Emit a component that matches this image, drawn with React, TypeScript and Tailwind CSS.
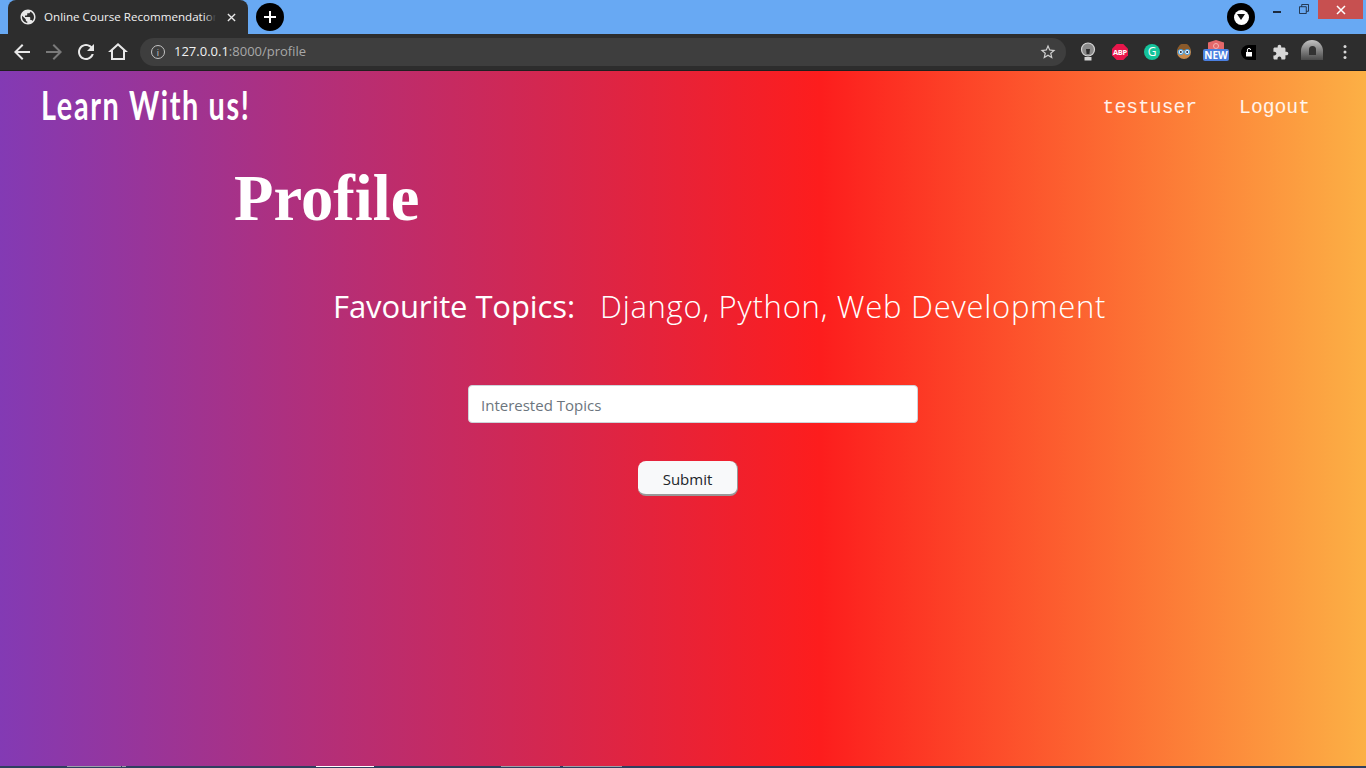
import { useState } from 'react'

const BACK = 'M20 11H7.83l5.59-5.59L12 4l-8 8 8 8 1.41-1.41L7.83 13H20v-2z'
const FORWARD = 'M4 11h12.17l-5.59-5.59L12 4l8 8-8 8-1.41-1.41L16.17 13H4v-2z'
const RELOAD = 'M17.65 6.35C16.2 4.9 14.21 4 12 4c-4.42 0-7.99 3.58-7.99 8s3.57 8 7.99 8c3.73 0 6.84-2.55 7.73-6h-2.08c-.82 2.33-3.04 4-5.65 4-3.31 0-6-2.69-6-6s2.69-6 6-6c1.66 0 3.14.69 4.22 1.78L13 11h7V4l-2.35 2.35z'
const HOME = 'M12 3L2 12h3v8h14v-8h3L12 3zm5 15H7v-7.81l5-4.5 5 4.5V18z'
const STAR = 'M22 9.24l-7.19-.62L12 2 9.19 8.63 2 9.24l5.46 4.73L5.82 21 12 17.27 18.18 21l-1.63-7.03L22 9.24zM12 15.4l-3.76 2.27 1-4.28-3.32-2.88 4.38-.38L12 6.1l1.71 4.04 4.38.38-3.32 2.88 1 4.28L12 15.4z'
const PUZZLE = 'M20.5 11H19V7c0-1.1-.9-2-2-2h-4V3.5C13 2.12 11.88 1 10.5 1S8 2.12 8 3.5V5H4c-1.1 0-1.99.9-1.99 2v3.8H3.5c1.49 0 2.7 1.21 2.7 2.7s-1.21 2.7-2.7 2.7H2V20c0 1.1.9 2 2 2h3.8v-1.5c0-1.49 1.21-2.7 2.7-2.7 1.49 0 2.7 1.21 2.7 2.7V22H17c1.1 0 2-.9 2-2v-4h1.5c1.38 0 2.5-1.12 2.5-2.5S21.88 11 20.5 11z'
const GLOBE = 'M12 2C6.48 2 2 6.48 2 12s4.48 10 10 10 10-4.48 10-10S17.52 2 12 2zm-1 17.93c-3.95-.49-7-3.85-7-7.93 0-.62.08-1.21.21-1.79L9 15v1c0 1.1.9 2 2 2v1.93zm6.9-2.54c-.26-.81-1-1.39-1.9-1.39h-1v-3c0-.55-.45-1-1-1H8v-2h2c.55 0 1-.45 1-1V7h2c1.1 0 2-.9 2-2v-.41c2.93 1.19 5 4.06 5 7.41 0 2.08-.8 3.97-2.1 5.39z'

function Glyph({ d, className }: { d: string; className: string }) {
  return (
    <svg viewBox="0 0 24 24" className={className} fill="currentColor">
      <path d={d} />
    </svg>
  )
}

function TabStrip() {
  return (
    <div className="h-[34px] bg-[#68a9f3] flex items-start pl-2 pr-[3px] shrink-0" style={{ fontFamily: '"Open Sans", sans-serif' }}>
      <div className="w-[240px] h-[34px] bg-[#2d2d2d] rounded-t-lg flex items-center pl-[11px] pr-[12px] shrink-0">
        <Glyph d={GLOBE} className="w-[18px] h-[18px] shrink-0 text-[#e8e8e8]" />
        <div className="relative ml-[7px] w-[172px] overflow-hidden">
          <span className="block text-[11.6px] text-[#f1f1f1] whitespace-nowrap">Online Course Recommendation</span>
          <div className="absolute right-0 top-0 bottom-0 w-3 bg-gradient-to-r from-transparent to-[#2d2d2d]" />
        </div>
        <svg viewBox="0 0 10 10" className="ml-auto w-[9px] h-[9px] text-[#e8e8e8]" stroke="currentColor" strokeWidth="1.5">
          <path d="M1 1l8 8M9 1l-8 8" />
        </svg>
      </div>
      <div className="ml-2 mt-[3px] w-7 h-7 rounded-full bg-black flex items-center justify-center text-white">
        <svg viewBox="0 0 14 14" className="w-[14px] h-[14px]" stroke="currentColor" strokeWidth="2">
          <path d="M7 1v12M1 7h12" />
        </svg>
      </div>
      <div className="ml-auto flex items-start">
        <div className="mt-[3px] w-7 h-7 rounded-full bg-black flex items-center justify-center">
          <div className="w-[15px] h-[15px] rounded-full bg-white flex items-center justify-center">
            <svg viewBox="0 0 8 6" className="w-2 h-[6px]" fill="#111">
              <path d="M0 0h8L4 6z" />
            </svg>
          </div>
        </div>
        <div className="w-[44px] h-[23px] flex items-center justify-center">
          <div className="w-2 h-[2px] bg-[#1c2b3f]" />
        </div>
        <div className="w-[19px] h-[19px] flex items-start justify-start pt-1">
          <svg viewBox="0 0 11 11" className="w-[10px] h-[10px]" fill="none" stroke="#1c2b3f" strokeWidth="1">
            <path d="M.5 3h7.5v7.5H.5zM3 3V.5h7.5V8H8" />
          </svg>
        </div>
        <div className="w-[45px] h-[19px] bg-[#c75050] flex items-center justify-center">
          <svg viewBox="0 0 10 10" className="w-[10px] h-[10px]" stroke="#fff" strokeWidth="1.5">
            <path d="M1 1l8 8M9 1l-8 8" />
          </svg>
        </div>
      </div>
    </div>
  )
}

function Toolbar() {
  return (
    <div className="h-[37px] bg-[#2d2d2d] border-b border-[#1f1f1f] flex items-center shrink-0" style={{ fontFamily: '"Open Sans", sans-serif' }}>
      <Glyph d={BACK} className="ml-[10px] w-6 h-6 text-[#e8e8e8]" />
      <Glyph d={FORWARD} className="ml-2 w-6 h-6 text-[#7a7a7a]" />
      <Glyph d={RELOAD} className="ml-2 w-6 h-6 text-[#e8e8e8]" />
      <Glyph d={HOME} className="ml-2 w-6 h-6 text-[#e8e8e8]" />
      <div className="ml-[10px] w-[926px] h-7 rounded-full bg-[#3e3e3e] flex items-center pl-[11px] pr-[9px]">
        <div className="w-[14px] h-[14px] rounded-full border border-[#c4c4c4] flex items-center justify-center text-[9px] leading-none text-[#c4c4c4]">i</div>
        <span className="ml-[9px] text-[13px] text-[#f1f1f1]">127.0.0.1<span className="text-[#a8a8a8]">:8000/profile</span></span>
        <Glyph d={STAR} className="ml-auto w-[18px] h-[18px] text-[#d0d0d0]" />
      </div>
      <div className="ml-[14px] flex items-center">
        {/* bulb extension */}
        <svg viewBox="0 0 16 20" className="w-4 h-5" fill="none">
          <circle cx="8" cy="7.5" r="6.5" fill="#8a8a8a" stroke="#d5d5d5" strokeWidth="1.2" />
          <path d="M6 7h4l-.6 5H6.6z" fill="#2d2d2d" />
          <path d="M4.5 15h7v3.5h-7z" fill="#d5d5d5" />
        </svg>
        {/* ABP */}
        <svg viewBox="0 0 16 16" className="ml-4 w-4 h-4">
          <polygon points="4.7,0 11.3,0 16,4.7 16,11.3 11.3,16 4.7,16 0,11.3 0,4.7" fill="#e8164b" />
          <text x="8" y="11" textAnchor="middle" fontSize="7.5" fontWeight="700" fill="#fff" letterSpacing="-0.3">ABP</text>
        </svg>
        {/* grammarly */}
        <div className="ml-4 w-4 h-4 rounded-full bg-[#15c39a] flex items-center justify-center text-[12px] text-white leading-none">G</div>
        {/* glasses face */}
        <svg viewBox="0 0 16 16" className="ml-4 w-4 h-4">
          <circle cx="8" cy="8" r="7" fill="#c98a4b" />
          <path d="M1.5 6a6.5 6.5 0 0 1 13 0z" fill="#8a5a2b" />
          <circle cx="4.8" cy="8" r="2.6" fill="#e8f4ff" stroke="#3b9be0" />
          <circle cx="11.2" cy="8" r="2.6" fill="#e8f4ff" stroke="#3b9be0" />
          <circle cx="4.8" cy="8" r="1" fill="#223" />
          <circle cx="11.2" cy="8" r="1" fill="#223" />
        </svg>
        {/* shield with NEW badge */}
        <div className="relative ml-[11px] w-[26px] h-5">
          <svg viewBox="0 0 16 12" className="absolute left-[5px] -top-[2px] w-4 h-3">
            <path d="M0 2.5L8 0l8 2.5V12H0z" fill="#e4686a" />
            <circle cx="8" cy="6" r="2.5" fill="none" stroke="#f3b5b5" />
          </svg>
          <div className="absolute left-0 top-[7px] w-[26px] h-3 bg-[#4a7fe0] rounded-[2px] text-[10px] leading-3 font-bold text-white text-center">NEW</div>
        </div>
        {/* lock */}
        <div className="ml-3 w-[15px] h-[15px] rounded-l-full rounded-r-[1px] bg-black flex items-center justify-center">
          <svg viewBox="0 0 10 10" className="w-[10px] h-[10px]">
            <path d="M2 5h6v4.5H2z" fill="#fff" />
            <path d="M3.4 5V3a1.6 1.6 0 0 1 3.2 0" fill="none" stroke="#fff" />
          </svg>
        </div>
        <Glyph d={PUZZLE} className="ml-4 w-[17px] h-[17px] text-[#d8d8d8]" />
        {/* profile avatar */}
        <div className="ml-3 -mt-[4px] w-[22px] h-5 rounded-t-full rounded-b-[10px] bg-gradient-to-b from-[#c4c4c4] to-[#4a4a4a] flex items-center justify-center">
          <div className="w-[7px] h-[9px] rounded-t-full bg-[#333]" />
        </div>
        <svg viewBox="0 0 4 16" className="ml-5 w-1 h-4" fill="#d8d8d8">
          <circle cx="2" cy="2.5" r="1.5" />
          <circle cx="2" cy="8" r="1.5" />
          <circle cx="2" cy="13.5" r="1.5" />
        </svg>
      </div>
    </div>
  )
}

// Sliver of the desktop taskbar under the window
function Taskbar() {
  return (
    <div className="flex-1 bg-[#2f3f5f] flex items-start">
      <div className="ml-[67px] w-[54px] h-px bg-[#9aa0a8]" />
      <div className="ml-px w-[4px] h-px bg-[#9aa0a8]" />
      <div className="ml-[190px] w-[58px] h-px bg-white" />
      <div className="ml-[127px] w-[59px] h-px bg-[#9aa0a8]" />
      <div className="ml-[3px] w-[59px] h-px bg-[#9aa0a8]" />
    </div>
  )
}

export default function App() {
  const [topics, setTopics] = useState('')

  return (
    <div className="h-screen flex flex-col overflow-hidden">
      <TabStrip />
      <Toolbar />
      <div className="h-[695px] shrink-0 text-white bg-[linear-gradient(90deg,#833ab4_0%,#fd1d1d_60%,#fcb045_100%)]">
        {/* Navbar */}
        <nav className="flex items-center h-[72px] pl-[41px] pr-[56px]">
          <span className="block origin-left scale-x-[0.72] text-[40px] font-bold leading-none tracking-[2.3px] -mt-[5px] whitespace-nowrap" style={{ fontFamily: 'Lato, sans-serif' }}>Learn With us!</span>
          <div className="ml-auto flex gap-[42px] text-[19.7px] text-white/90 mt-[3px]" style={{ fontFamily: '"Liberation Mono", monospace' }}>
            <span>testuser</span>
            <span>Logout</span>
          </div>
        </nav>

        {/* Heading */}
        <h1 className="ml-[234px] mt-[16px] text-[64.6px] leading-[78px] font-bold" style={{ fontFamily: '"Liberation Serif", serif' }}>Profile</h1>

        {/* Favourites */}
        <div className="ml-[333px] mt-[49px] flex text-[31px] leading-[40px] whitespace-nowrap" style={{ fontFamily: '"Open Sans", sans-serif' }}>
          <span className="w-[267px] tracking-[-0.1px]">Favourite Topics:</span>
          <span className="font-light tracking-[0.75px]">Django, Python, Web Development</span>
        </div>

        {/* Form */}
        <form style={{ fontFamily: '"Open Sans", sans-serif' }} onSubmit={e => e.preventDefault()}>
          <input
            type="text"
            placeholder="Interested Topics"
            value={topics}
            onChange={e => setTopics(e.target.value)}
            className="block ml-[468px] mt-[59px] w-[450px] h-[38px] px-3 pt-[2px] bg-white border border-[#ced4da] rounded text-[15px] text-[#495057] placeholder-[#6c757d] outline-none"
          />
          <button
            type="submit"
            className="block ml-[638px] mt-[38px] w-[100px] h-[35px] pt-1 bg-[#f8f9fa] text-[#212529] text-[15px] rounded-lg border-b-2 border-r border-[#999]"
          >
            Submit
          </button>
        </form>
      </div>
      <Taskbar />
    </div>
  )
}
